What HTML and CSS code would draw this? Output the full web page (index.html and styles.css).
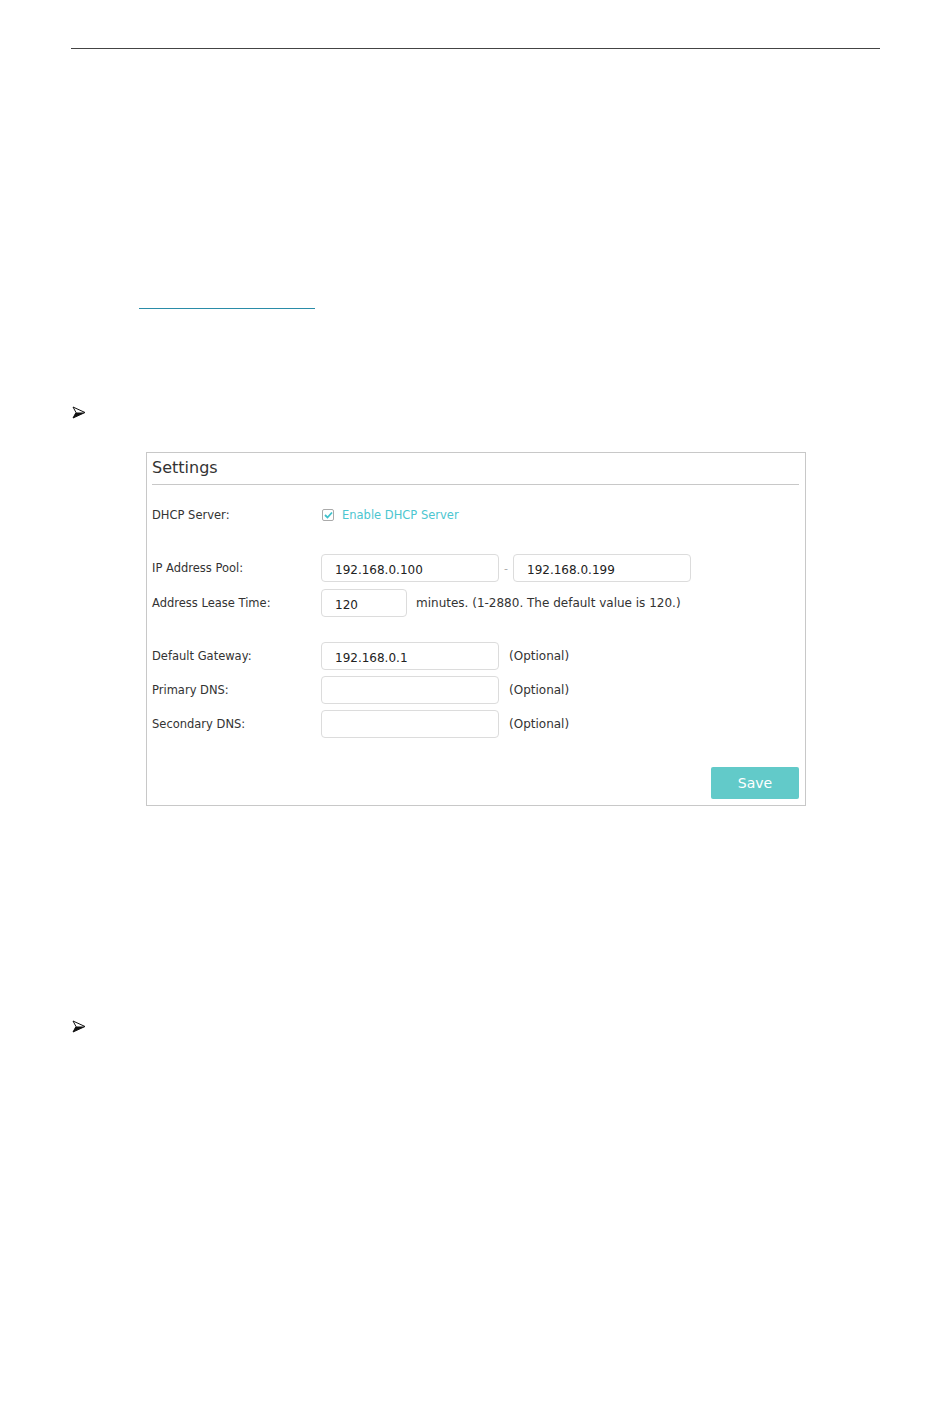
FILE: index.html
```html
<!DOCTYPE html>
<html lang="en">
<head>
    <meta charset="UTF-8">
    <meta name="viewport" content="width=device-width, initial-scale=1.0">
    <title>DHCP Server</title>
    <link rel="stylesheet" href="styles.css">
</head>
<body>
    <div class="page">
        <div class="top-rule"></div>
        <a class="doc-link" href="#"></a>
        <div class="bullet bullet-first">
            <svg width="14" height="13" viewBox="0 0 14 13"><path d="M1 1 L13 6.5 L1 12 L4 6.5 Z" fill="#fff" stroke="#111" stroke-width="1"/><path d="M4 6.5 L13 6.5 L1 12 Z" fill="#111"/></svg>
        </div>
        <div class="settings">
            <div class="settings-title">Settings</div>
            <div class="form">
                <div class="row row-dhcp">
                    <div class="label">DHCP Server:</div>
                    <label class="check">
                        <span class="box"><svg width="9" height="8" viewBox="0 0 9 8"><path d="M1 4 L3.5 6.5 L8 1.5" fill="none" stroke="#3fc1cb" stroke-width="1.8"/></svg></span>
                        Enable DHCP Server
                    </label>
                </div>
                <div class="row row-pool">
                    <div class="label">IP Address Pool:</div>
                    <div class="field">
                        <input class="input" type="text" value="192.168.0.100">
                        <span class="dash">-</span>
                        <input class="input" type="text" value="192.168.0.199">
                    </div>
                </div>
                <div class="row row-lease">
                    <div class="label">Address Lease Time:</div>
                    <div class="field">
                        <input class="input input-short" type="text" value="120">
                        <span class="hint hint-lease">minutes. (1-2880. The default value is 120.)</span>
                    </div>
                </div>
                <div class="row row-gateway">
                    <div class="label">Default Gateway:</div>
                    <div class="field">
                        <input class="input" type="text" value="192.168.0.1">
                        <span class="hint">(Optional)</span>
                    </div>
                </div>
                <div class="row">
                    <div class="label">Primary DNS:</div>
                    <div class="field">
                        <input class="input" type="text" value="">
                        <span class="hint">(Optional)</span>
                    </div>
                </div>
                <div class="row">
                    <div class="label">Secondary DNS:</div>
                    <div class="field">
                        <input class="input" type="text" value="">
                        <span class="hint">(Optional)</span>
                    </div>
                </div>
            </div>
            <div class="actions">
                <button class="save-button" type="button">Save</button>
            </div>
        </div>
        <div class="bullet bullet-second">
            <svg width="14" height="13" viewBox="0 0 14 13"><path d="M1 1 L13 6.5 L1 12 L4 6.5 Z" fill="#fff" stroke="#111" stroke-width="1"/><path d="M4 6.5 L13 6.5 L1 12 Z" fill="#111"/></svg>
        </div>
    </div>
</body>
</html>
```

FILE: styles.css
```css
body {
    margin: 0;
    background: #fff;
    font-family: "DejaVu Sans", Verdana, sans-serif;
    color: #333;
}
.page {
    width: 809px;
    padding: 48px 0 0 71px;
    display: flex;
    flex-direction: column;
    align-items: flex-start;
}
.top-rule {
    width: 809px;
    height: 1px;
    background-color: #444;
}
.doc-link {
    display: block;
    width: 176px;
    height: 1px;
    margin: 259px 0 0 68px;
    background-color: #2a8ca8;
}
.bullet {
    display: flex;
    margin-left: 1px;
}
.bullet-first {
    margin-top: 97px;
}
.bullet-second {
    margin-top: 214px;
}
.settings {
    margin: 33px 0 0 75px;
    width: 647px;
    height: 352px;
    border: 1px solid #c8c8c8;
    padding: 0 6px 0 5px;
    display: flex;
    flex-direction: column;
}
.settings-title {
    font-size: 16px;
    color: #333;
    height: 31px;
    line-height: 29px;
    border-bottom: 1px solid #c8c8c8;
}
.form {
    display: flex;
    flex-direction: column;
    gap: 6px;
    padding-top: 20px;
}
.row {
    display: grid;
    grid-template-columns: 169px 1fr;
    align-items: center;
    min-height: 28px;
    font-size: 11.5px;
}
.row-dhcp {
    margin-bottom: 24px;
    min-height: 19px;
}
.row-lease {
    margin-top: 1px;
    margin-bottom: 19px;
}
.label {
    color: #333;
}
.check {
    display: flex;
    align-items: center;
    gap: 8px;
    color: #4cc6d0;
    font-size: 11.5px;
}
.box {
    width: 10px;
    height: 10px;
    border: 1px solid #aaa;
    border-radius: 2px;
    display: flex;
    align-items: center;
    justify-content: center;
    margin-left: 1px;
}
.field {
    display: flex;
    align-items: center;
}
.input {
    width: 178px;
    height: 28px;
    box-sizing: border-box;
    border: 1px solid #dcdcdc;
    border-radius: 4px;
    padding: 3px 0 0 13px;
    font-family: "DejaVu Sans", Verdana, sans-serif;
    font-size: 12px;
    color: #222;
    background: #fff;
    outline: none;
}
.input-short {
    width: 86px;
}
.dash {
    width: 14px;
    text-align: center;
    color: #aaa;
    font-size: 11px;
}
.hint {
    margin-left: 10px;
    font-size: 12px;
    color: #333;
}
.hint-lease {
    margin-left: 9px;
}
.actions {
    margin-top: auto;
    display: flex;
    justify-content: flex-end;
    padding-bottom: 6px;
}
.save-button {
    width: 88px;
    height: 32px;
    border: none;
    border-radius: 2px;
    background-color: #62cac9;
    color: #fff;
    font-family: "DejaVu Sans", Verdana, sans-serif;
    font-size: 14px;
    cursor: pointer;
}
```
